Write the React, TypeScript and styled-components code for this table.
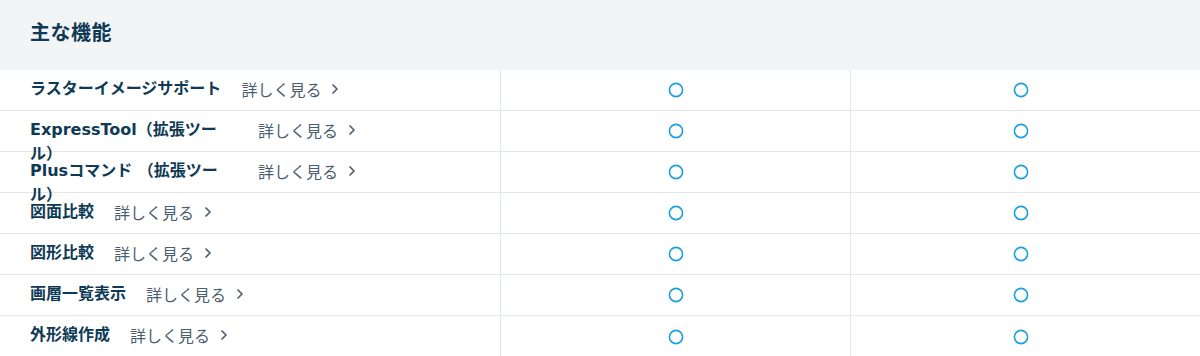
import React from "react";
import styled, { createGlobalStyle } from "styled-components";

const GlobalStyle = createGlobalStyle`
  html, body { margin: 0; padding: 0; background: #ffffff; }
  body {
    font-family: "Noto Sans CJK JP", sans-serif;
    -webkit-font-smoothing: antialiased;
  }
`;

const Section = styled.section`
  width: 1200px;
`;

const Header = styled.div`
  height: 70px;
  background: #f2f4f6;
  display: flex;
  align-items: center;
  padding: 0 30px;
  box-sizing: border-box;
`;

const Title = styled.h2`
  margin: 0 0 8px;
  font-size: 20px;
  font-weight: 700;
  color: #0f3a55;
  letter-spacing: 0.5px;
`;

const Table = styled.div`
  display: grid;
  grid-template-columns: 500px 350px 1fr;
`;

const Cell = styled.div<{ $last?: boolean }>`
  height: 41px;
  box-sizing: border-box;
  border-bottom: ${(p) => (p.$last ? "none" : "1px solid #e2e7ea")};
`;

const NameCell = styled(Cell)`
  display: flex;
  align-items: flex-start;
  padding: 7px 30px 0;
`;

const MarkCell = styled(Cell)<{ $pad?: number }>`
  border-left: 1px solid #e2e7ea;
  display: flex;
  align-items: center;
  justify-content: center;
  padding-right: ${(p) => p.$pad ?? 0}px;
`;

const Name = styled.span`
  max-width: 208px;
  font-family: "DejaVu Sans", "Noto Sans CJK JP", sans-serif;
  font-size: 16px;
  line-height: 24px;
  font-weight: 700;
  color: #0f3a55;
`;

const More = styled.a`
  flex-shrink: 0;
  margin-left: 20px;
  display: inline-flex;
  align-items: center;
  gap: 10px;
  font-size: 16px;
  line-height: 24px;
  color: #4b5d70;
  text-decoration: none;
  white-space: nowrap;
  cursor: pointer;
  font-weight: 400;
`;

const Chevron = () => (
  <svg width="8" height="12" viewBox="0 0 8 12" aria-hidden="true">
    <path d="M2 2l4 4-4 4" fill="none" stroke="#4b5d70" strokeWidth="1.7" strokeLinecap="round" strokeLinejoin="round" />
  </svg>
);

const Circle = () => (
  <svg width="16" height="16" viewBox="0 0 16 16" aria-hidden="true">
    <circle cx="8" cy="8" r="6.6" fill="none" stroke="#1a9fe0" strokeWidth="1.6" />
  </svg>
);

const features = [
  "ラスターイメージサポート",
  "ExpressTool（拡張ツール）",
  "Plusコマンド （拡張ツール）",
  "図面比較",
  "図形比較",
  "画層一覧表示",
  "外形線作成",
];

export default function App() {
  return (
    <>
      <GlobalStyle />
      <Section>
        <Header>
          <Title>主な機能</Title>
        </Header>
        <Table>
          {features.map((f, i) => {
            const last = i === features.length - 1;
            return (
              <React.Fragment key={f}>
                <NameCell $last={last}>
                  <Name>{f}</Name>
                  <More>
                    詳しく見る
                    <Chevron />
                  </More>
                </NameCell>
                <MarkCell $last={last}>
                  <Circle />
                </MarkCell>
                <MarkCell $last={last} $pad={10}>
                  <Circle />
                </MarkCell>
              </React.Fragment>
            );
          })}
        </Table>
      </Section>
    </>
  );
}
